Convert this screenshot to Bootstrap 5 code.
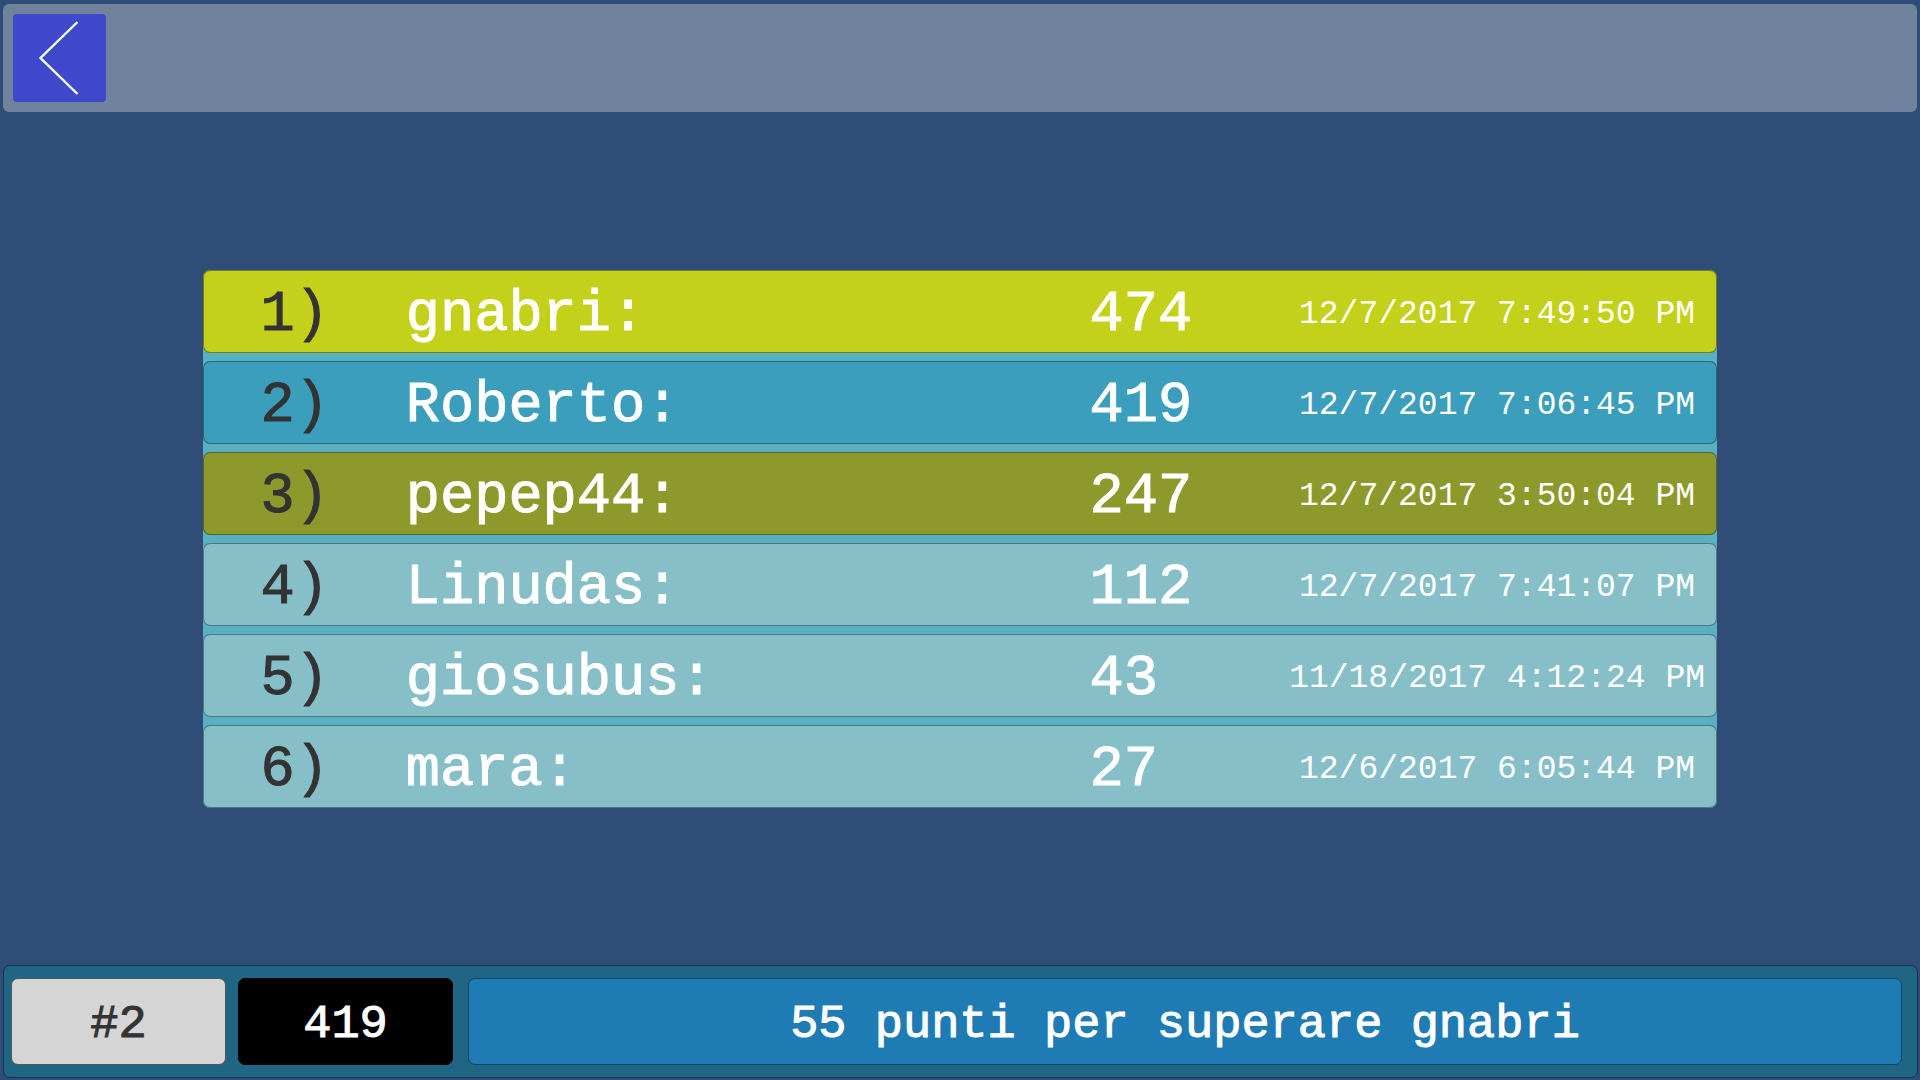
<!DOCTYPE html>
<html lang="it">
<head>
<meta charset="utf-8">
<meta name="viewport" content="width=device-width, initial-scale=1">
<title>Classifica</title>
<link href="https://cdn.jsdelivr.net/npm/bootstrap@5.3.0/dist/css/bootstrap.min.css" rel="stylesheet">
<style>
  body { background: #304d78; color: #fff; font-family: "Liberation Mono", monospace; }
  .top-bar { margin: 4px 3px 0; padding: 10px; background: #71839c; border-radius: 6px; }
  .back-btn { width: 93px; height: 88px; background: #4048cc; border-radius: 4px; }
  .ranking { width: 78.9%; margin-top: 1px; }
  .ranking tbody { background: #58b0c1; border-radius: 7px; }
  .ranking tr { height: 83px; padding-top: 6px; border: 1px solid rgba(16, 52, 58, .5); border-radius: 7px; background: #87bfc9; font-size: 57px; line-height: 64px; white-space: nowrap; -webkit-text-stroke: 1px; }
  .ranking tr.first { background: #c4d11a; }
  .ranking tr.own { background: #3a9ebc; }
  .ranking tr.third { background: #8d9a2b; }
  .ranking th { width: 13.3%; padding-left: 57px; color: #333; font-weight: 400; }
  .player { width: 45.2%; }
  .points { width: 12.5%; }
  .moment { font-size: 33px; line-height: 40px; -webkit-text-stroke: 0; }
  .status-bar { margin: 0 2px 2px 3px; padding: 12px 15px 12px 7px; background: #216585; border: 1px solid #15344f; border-radius: 7px; font-size: 47px; line-height: 56px; gap: 12px; }
  .tile { height: 87px; padding-top: 6px; border: 1px solid #10476b; border-radius: 7px; -webkit-text-stroke: 1px; }
  .tile-small { width: 215px; }
  .tile-rank { background: #d5d5d5; border-color: #4a5a60; color: #333; }
  .tile-score { background: #000; border-color: #000; }
  .tile-message { background: #1e7bb4; margin-left: 3px; }
</style>
<script src="https://cdn.jsdelivr.net/npm/bootstrap@5.3.0/dist/js/bootstrap.bundle.min.js"></script>
</head>
<body class="d-flex flex-column min-vh-100">
<header class="top-bar d-flex">
  <button type="button" class="back-btn btn border-0 p-0" aria-label="Indietro">
    <svg class="d-block" width="93" height="88" viewBox="0 0 93 88" fill="none" stroke="#fff" stroke-width="2.4" aria-hidden="true"><path d="M64.500 8 L27.500 44 L64.500 80"/></svg>
  </button>
</header>
<main class="flex-grow-1 d-flex align-items-center justify-content-center">
  <table class="ranking d-block">
    <tbody class="d-grid gap-2">
      <tr class="first d-flex align-items-center"><th scope="row">1)</th><td class="player">gnabri:</td><td class="points">474</td><td class="moment flex-fill text-center">12/7/2017 7:49:50 PM</td></tr>
      <tr class="own d-flex align-items-center"><th scope="row">2)</th><td class="player">Roberto:</td><td class="points">419</td><td class="moment flex-fill text-center">12/7/2017 7:06:45 PM</td></tr>
      <tr class="third d-flex align-items-center"><th scope="row">3)</th><td class="player">pepep44:</td><td class="points">247</td><td class="moment flex-fill text-center">12/7/2017 3:50:04 PM</td></tr>
      <tr class="d-flex align-items-center"><th scope="row">4)</th><td class="player">Linudas:</td><td class="points">112</td><td class="moment flex-fill text-center">12/7/2017 7:41:07 PM</td></tr>
      <tr class="d-flex align-items-center"><th scope="row">5)</th><td class="player">giosubus:</td><td class="points">43</td><td class="moment flex-fill text-center">11/18/2017 4:12:24 PM</td></tr>
      <tr class="d-flex align-items-center"><th scope="row">6)</th><td class="player">mara:</td><td class="points">27</td><td class="moment flex-fill text-center">12/6/2017 6:05:44 PM</td></tr>
    </tbody>
  </table>
</main>
<footer class="status-bar d-flex">
  <div class="tile tile-small tile-rank d-flex align-items-center justify-content-center">#2</div>
  <div class="tile tile-small tile-score d-flex align-items-center justify-content-center">419</div>
  <div class="tile tile-message flex-fill d-flex align-items-center justify-content-center">55 punti per superare gnabri</div>
</footer>
</body>
</html>
